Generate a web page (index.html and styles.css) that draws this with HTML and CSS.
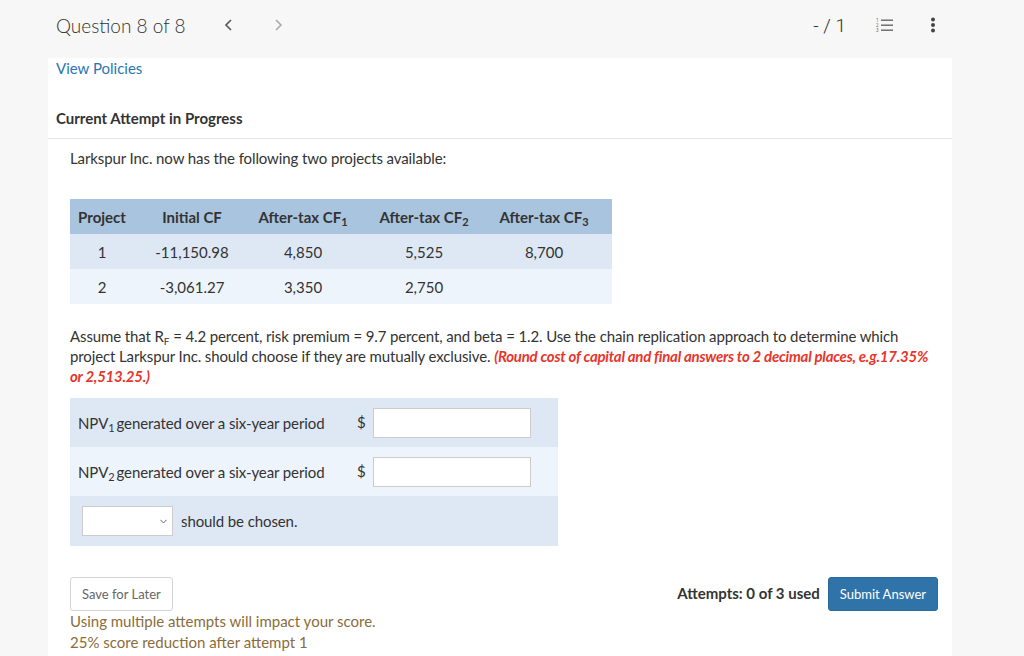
FILE: index.html
```html
<!DOCTYPE html>
<html>
<head>
    <title>Question 8 of 8</title>
    <link rel="stylesheet" href="styles.css">
</head>
<body>
    <div class="topbar">
        <div class="topbar-left">
            <span class="q-title">Question 8 of 8</span>
            <span class="nav-arrow">
                <svg width="10" height="12" viewBox="0 0 10 12"><polyline points="7,1 2,6 7,11" fill="none" stroke="#555" stroke-width="1.6"/></svg>
            </span>
            <span class="nav-arrow disabled">
                <svg width="10" height="12" viewBox="0 0 10 12"><polyline points="3,1 8,6 3,11" fill="none" stroke="#aaa" stroke-width="1.6"/></svg>
            </span>
        </div>
        <div class="topbar-right">
            <span class="score">- / 1</span>
            <span class="list-icon">
                <svg width="18" height="15" viewBox="0 0 18 15">
                    <text x="0" y="4" font-size="4.5" font-family="Roboto, sans-serif" fill="#666">1</text>
                    <text x="0" y="9" font-size="4.5" font-family="Roboto, sans-serif" fill="#666">2</text>
                    <text x="0" y="14" font-size="4.5" font-family="Roboto, sans-serif" fill="#666">3</text>
                    <rect x="5" y="1.5" width="12" height="1.4" fill="#666"/>
                    <rect x="5" y="6.5" width="12" height="1.4" fill="#666"/>
                    <rect x="5" y="11.5" width="12" height="1.4" fill="#666"/>
                </svg>
            </span>
            <span class="more-icon">
                <svg width="6" height="16" viewBox="0 0 6 16">
                    <circle cx="3" cy="2.5" r="2" fill="#444"/>
                    <circle cx="3" cy="8" r="2" fill="#444"/>
                    <circle cx="3" cy="13.5" r="2" fill="#444"/>
                </svg>
            </span>
        </div>
    </div>

    <div class="panel">
        <a class="policies" href="#">View Policies</a>
        <div class="attempt-title">Current Attempt in Progress</div>

        <div class="question">
            <p class="intro">Larkspur Inc. now has the following two projects available:</p>

            <table class="cf-table">
                <colgroup>
                    <col style="width: 64px">
                    <col style="width: 116px">
                    <col style="width: 106px">
                    <col style="width: 136px">
                    <col style="width: 120px">
                </colgroup>
                <thead>
                    <tr>
                        <th>Project</th>
                        <th>Initial CF</th>
                        <th>After-tax CF<sub>1</sub></th>
                        <th>After-tax CF<sub>2</sub></th>
                        <th>After-tax CF<sub>3</sub></th>
                    </tr>
                </thead>
                <tbody>
                    <tr>
                        <td>1</td>
                        <td>-11,150.98</td>
                        <td>4,850</td>
                        <td>5,525</td>
                        <td>8,700</td>
                    </tr>
                    <tr>
                        <td>2</td>
                        <td>-3,061.27</td>
                        <td>3,350</td>
                        <td>2,750</td>
                        <td></td>
                    </tr>
                </tbody>
            </table>

            <p class="prompt">Assume that R<sub>F</sub> = 4.2 percent, risk premium = 9.7 percent, and beta = 1.2. Use the chain replication approach to determine which project Larkspur Inc. should choose if they are mutually exclusive. <em class="hint">(Round cost of capital and final answers to 2 decimal places, e.g.17.35% or 2,513.25.)</em></p>

            <div class="answers">
                <div class="answer-row">
                    <span class="answer-label">NPV<sub>1</sub>generated over a six-year period</span>
                    <span class="dollar">$</span>
                    <input class="answer-input" type="text">
                </div>
                <div class="answer-row light">
                    <span class="answer-label">NPV<sub>2</sub>generated over a six-year period</span>
                    <span class="dollar">$</span>
                    <input class="answer-input" type="text">
                </div>
                <div class="answer-row">
                    <span class="fake-select">
                        <svg width="7" height="5" viewBox="0 0 7 5"><polyline points="0.5,0.8 3.5,4 6.5,0.8" fill="none" stroke="#666" stroke-width="1"/></svg>
                    </span>
                    <span class="chosen">should be chosen.</span>
                </div>
            </div>

            <div class="footer">
                <div class="footer-left">
                    <button class="btn-save">Save for Later</button>
                    <div class="warning">Using multiple attempts will impact your score.<br>25% score reduction after attempt 1</div>
                </div>
                <div class="footer-right">
                    <span class="attempts">Attempts: 0 of 3 used</span>
                    <button class="btn-submit">Submit Answer</button>
                </div>
            </div>
        </div>
    </div>
</body>
</html>
```

FILE: styles.css
```css
body {
    margin: 0;
    font-family: 'Lato', 'Open Sans', sans-serif;
    background-color: #f7f7f7;
    color: #333;
    font-size: 15px;
}
.topbar {
    height: 58px;
    display: flex;
    align-items: center;
    justify-content: space-between;
    padding: 0 88px 0 56px;
}
.topbar-left {
    display: flex;
    align-items: center;
}
.q-title {
    font-size: 19px;
    font-weight: 300;
    color: #333;
    margin-right: 38px;
    margin-top: -8px;
}
.nav-arrow {
    display: flex;
    margin-right: 39px;
    margin-top: -8px;
}
.topbar-right {
    display: flex;
    align-items: center;
    margin-top: -8px;
}
.score {
    font-family: 'Roboto', sans-serif;
    font-weight: 300;
    font-size: 19px;
    color: #333;
    margin-right: 30px;
}
.list-icon {
    display: flex;
    margin-right: 36px;
}
.more-icon {
    display: flex;
}
.panel {
    margin-left: 48px;
    width: 904px;
    background-color: white;
    min-height: 598px;
}
.policies {
    display: block;
    padding-left: 8px;
    line-height: 20px;
    color: #2a76b4;
    text-decoration: none;
}
.attempt-title {
    margin-top: 30px;
    padding: 0 0 10px 8px;
    line-height: 20px;
    font-weight: bold;
    border-bottom: 1px solid #e6e6e6;
}
.question {
    padding: 0 14px 0 22px;
}
.intro {
    margin: 9px 0 0;
    line-height: 20px;
    letter-spacing: -0.1px;
}
.cf-table {
    margin-top: 31px;
    width: 542px;
    border-collapse: collapse;
    table-layout: fixed;
}
.cf-table th,
.cf-table td {
    height: 35px;
    padding: 0;
    text-align: center;
    vertical-align: middle;
}
.cf-table th:last-child,
.cf-table td:last-child {
    padding-right: 16px;
}
.cf-table th {
    background-color: #a9c4de;
    font-weight: bold;
}
.cf-table tbody tr:nth-child(1) td {
    background-color: #dee8f4;
}
.cf-table tbody tr:nth-child(2) td {
    background-color: #eef4fc;
}
sub {
    font-size: 11px;
    vertical-align: -3px;
    line-height: 0;
}
.prompt {
    margin: 22px 0 0;
    max-width: 862px;
    line-height: 20px;
    letter-spacing: -0.12px;
}
.prompt sub {
    font-size: 10px;
    letter-spacing: 0;
}
.hint {
    color: #e8352b;
    font-weight: bold;
    letter-spacing: -0.25px;
}
.answers {
    margin-top: 12px;
    width: 488px;
}
.answer-row {
    display: flex;
    align-items: center;
    height: 49px;
    padding-left: 8px;
    background-color: #dee8f4;
}
.answer-row:last-child {
    height: 50px;
    padding-left: 12px;
}
.answer-row.light {
    background-color: #eef4fc;
}
.answer-label {
    width: 279px;
    letter-spacing: -0.1px;
}
.answer-label sub {
    margin-right: 2px;
}
.dollar {
    width: 16px;
    margin-top: -2px;
}
.answer-input {
    width: 158px;
    height: 30px;
    box-sizing: border-box;
    border: 1px solid #ccc;
    background: white;
    margin: 0;
}
.fake-select {
    width: 91px;
    height: 30px;
    box-sizing: border-box;
    border: 1px solid #ccc;
    background: white;
    display: flex;
    align-items: center;
    justify-content: flex-end;
    padding-right: 5px;
    margin-right: 8px;
}
.chosen {
    letter-spacing: -0.1px;
}
.footer {
    margin-top: 31px;
    display: flex;
    justify-content: space-between;
    align-items: flex-start;
}
.btn-save {
    height: 34px;
    padding: 0 11px;
    background: white;
    border: 1px solid #d4d4d4;
    border-radius: 3px;
    color: #666;
    font-family: 'Lato', sans-serif;
    font-size: 13px;
}
.warning {
    color: #8a6d3b;
    line-height: 21px;
}
.footer-right {
    display: flex;
    align-items: center;
}
.attempts {
    font-weight: bold;
    margin-right: 8px;
    margin-top: -3px;
}
.btn-submit {
    height: 34px;
    padding: 0 11px;
    background-color: #2f73a8;
    border: 1px solid #2a6a9c;
    border-radius: 3px;
    color: white;
    font-family: 'Lato', sans-serif;
    font-size: 13px;
}
```
